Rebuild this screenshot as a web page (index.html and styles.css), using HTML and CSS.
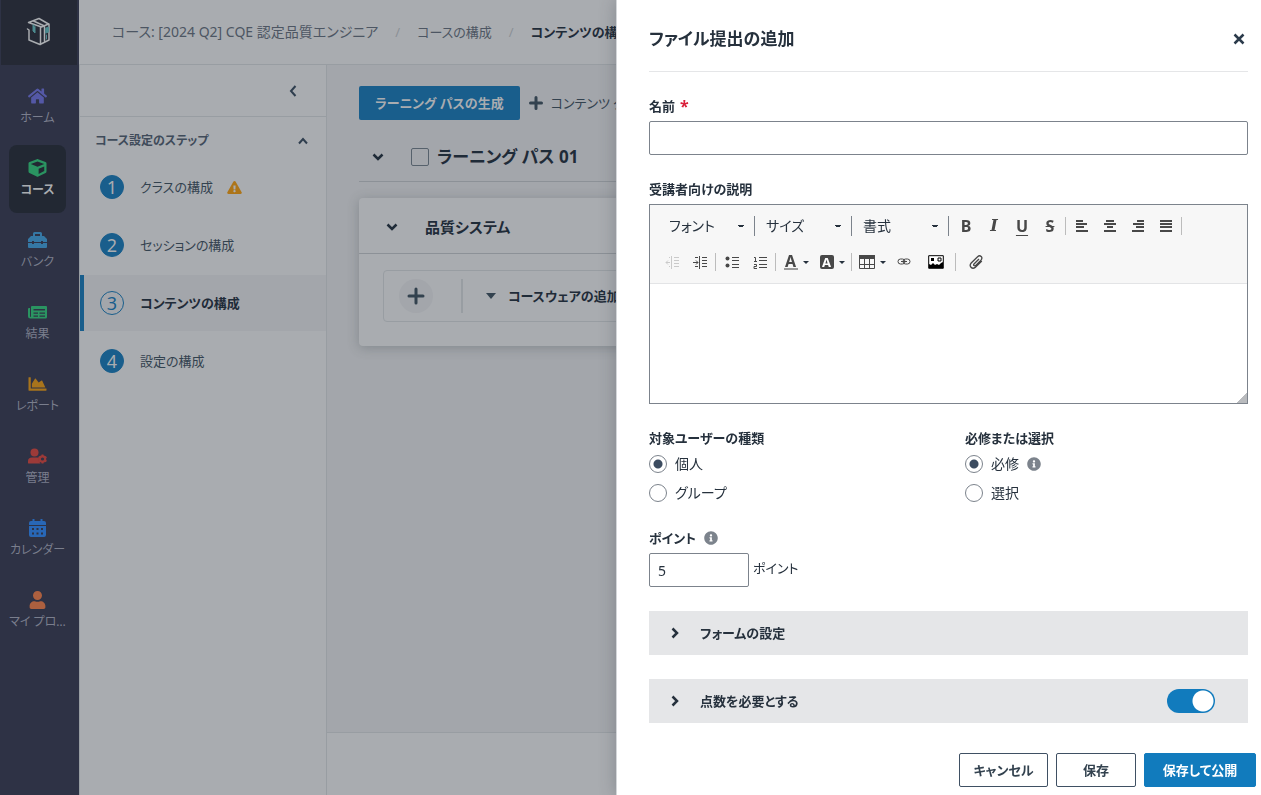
FILE: index.html
```html
<!DOCTYPE html>
<html lang="ja">
<head>
<meta charset="utf-8">
<meta name="viewport" content="width=device-width, initial-scale=1">
<title>ファイル提出の追加</title>
<link rel="stylesheet" href="styles.css">
</head>
<body>
<div class="app">
  <nav class="rail" aria-label="メイン">
    <a class="rail-logo" href="#" aria-label="トップ">
      <svg width="26" height="30" viewBox="0 0 26 30" fill="none" stroke="#a9acb0" stroke-width="1.5" stroke-linejoin="round" stroke-linecap="round"><path d="M2.500 5.500 13 1.500l9.500 5.500-7 3zM7.500 4l11 5M1.500 12l1.500 1v10l11 4.500 9-4.500V7M14.500 10v17.500M18.500 9.500V25"/><path d="M7 8v6l2 2V10zM20 11l2.500-1v5L20 16zM20.500 18v4" stroke="#4c8a8f" fill="#4c8a8f" stroke-width="1"/></svg>
    </a>
    <ul class="rail-list">
      <li><a class="rail-item" href="#"><svg class="ico-rail" viewBox="0 0 576 512" fill="#5458a6"><path d="M280.37 148.26L96 300.11V464a16 16 0 0 0 16 16l112.06-.29a16 16 0 0 0 15.92-16V368a16 16 0 0 1 16-16h64a16 16 0 0 1 16 16v95.64a16 16 0 0 0 16 16.05L464 480a16 16 0 0 0 16-16V300L295.67 148.26a12.19 12.19 0 0 0-15.3 0zM571.6 251.47L488 182.56V44.05a12 12 0 0 0-12-12h-56a12 12 0 0 0-12 12v72.61L318.47 43a48 48 0 0 0-61 0L4.34 251.47a12 12 0 0 0-1.6 16.9l25.5 31A12 12 0 0 0 45.15 301l235.22-193.74a12.19 12.19 0 0 1 15.3 0L530.9 301a12 12 0 0 0 16.9-1.6l25.5-31a12 12 0 0 0-1.7-16.93z"/></svg><span>ホーム</span></a></li>
      <li><a class="rail-item is-active" href="#"><svg class="ico-rail" viewBox="0 0 512 512" fill="#2a9461"><path d="M239.1 6.3l-208 78c-18.7 7-31.1 25-31.1 45v225.1c0 18.2 10.3 34.8 26.5 42.9l208 104c13.5 6.8 29.4 6.8 42.9 0l208-104c16.3-8.1 26.5-24.8 26.5-42.9V129.3c0-20-12.4-37.9-31.1-44.9l-208-78C262 2.2 250 2.2 239.1 6.3zM256 68.4l192 72v1.1l-192 78-192-78v-1.1l192-72zm32 356V275.5l160-65v133.9l-160 80z"/></svg><span>コース</span></a></li>
      <li><a class="rail-item" href="#"><svg class="ico-rail" viewBox="0 0 19 18" fill="#3578a5"><path fill-rule="evenodd" d="M5 5V2.500Q5 1 6.500 1h6Q14 1 14 2.500V5h2l3 3v3h-4v-1h-2v1H6v-1H4v1H0V8l3-3zM7 5h5V3H7zM0 12h4v1h2v-1h7v1h2v-1h4v4q0 1-1 1H1q-1 0-1-1z"/></svg><span>バンク</span></a></li>
      <li><a class="rail-item" href="#"><svg class="ico-rail" viewBox="0 0 19 18" fill="#2a9461"><path fill-rule="evenodd" d="M4 3h14q1 0 1 1v10q0 1.500-1.500 1.500h-15Q0 15.500 0 13V6q0-1 1-1h1v8q0 1 .6 1T3 13V4q0-1 1-1zm1.500 3v1.500H17V6zM5.500 9.500v1.200H10V9.500zm6 0v1.200H17V9.500zm-6 3v1.200H10v-1.200zm6 0v1.200H17v-1.200z"/></svg><span>結果</span></a></li>
      <li><a class="rail-item" href="#"><svg class="ico-rail" viewBox="0 0 512 512" fill="#a8741c"><path d="M500 384c6.600 0 12 5.400 12 12v40c0 6.600-5.400 12-12 12H12c-6.600 0-12-5.400-12-12V76c0-6.600 5.400-12 12-12h40c6.600 0 12 5.400 12 12v308h436zM372.700 159.500L288 216l-85.300-113.700c-5.100-6.800-15.500-6.300-19.900 1L96 248v104h384l-89.900-187.800c-3.200-6.500-11.400-8.700-17.400-4.700z"/></svg><span>レポート</span></a></li>
      <li><a class="rail-item" href="#"><svg class="ico-rail" viewBox="0 0 19 18" fill="#9c3a38"><circle cx="6.500" cy="5.500" r="4"/><path d="M0 16v-2q0-3.500 4-3.500h5.500q.8 0 1.500.4-1 3 1.500 5.600H1q-1 0-1-.5z"/><circle cx="14.500" cy="12" r="2.700" fill="none" stroke="#9c3a38" stroke-width="2.200"/><path d="M14.500 7.500v2m0 5v2m-3.900-6.700 1.800 1m4.200 2.500 1.800 1m0-4.500-1.800 1m-4.200 2.500-1.800 1" stroke="#9c3a38" stroke-width="2"/></svg><span>管理</span></a></li>
      <li><a class="rail-item" href="#"><svg class="ico-rail" viewBox="0 0 19 18" fill="#2867b6"><path fill-rule="evenodd" d="M1 6V4q0-2 2-2h1.500V0h2v2h6V0h2v2H16q2 0 2 2v2zM1 7h17v9q0 2-2 2H3q-2 0-2-2zm3 2v2h2V9zm4.500 0v2h2V9zM13 9v2h2V9zm-9 4.500v2h2v-2zm4.500 0v2h2v-2zm4.500 0v2h2v-2z"/></svg><span>カレンダー</span></a></li>
      <li><a class="rail-item" href="#"><svg class="ico-rail" viewBox="0 0 448 512" fill="#ad603f"><path d="M224 256c70.700 0 128-57.300 128-128S294.700 0 224 0 96 57.300 96 128s57.300 128 128 128zm89.600 32h-16.700c-22.200 10.200-46.900 16-72.900 16s-50.600-5.800-72.900-16h-16.700C60.200 288 0 348.200 0 422.400V464c0 26.500 21.500 48 48 48h352c26.500 0 48-21.500 48-48v-41.600c0-74.200-60.200-134.400-134.400-134.400z"/></svg><span>マイ プロ…</span></a></li>
    </ul>
  </nav>

  <div class="page">
    <header class="topbar">
      <ol class="crumbs">
        <li class="first"><a href="#">コース: [2024 Q2] CQE 認定品質エンジニア</a></li>
        <li><a href="#">コースの構成</a></li>
        <li class="current"><a href="#">コンテンツの構成</a></li>
      </ol>
    </header>
    <div class="body">
      <aside class="steps">
        <div class="steps-top">
          <button class="plain" type="button" aria-label="折りたたむ"><svg width="8" height="12" viewBox="0 0 8 12" fill="none" stroke="#2f3e4e" stroke-width="2"><path d="M6.500 1 2 6l4.500 5"/></svg></button>
        </div>
        <button class="plain steps-title" type="button"><span>コース設定のステップ</span><svg width="10" height="8" viewBox="0 0 10 8" fill="none" stroke="#2f3e4e" stroke-width="2"><path d="M1 6.500 5 2l4 4.500"/></svg></button>
        <ul class="steps-list">
          <li><a class="step" href="#"><span class="num">1</span>クラスの構成<svg class="warn" viewBox="0 0 576 512" fill="#ad7519"><path d="M569.517 440.013C587.975 472.007 564.806 512 527.940 512H48.054c-36.937 0-59.999-40.055-41.577-71.987L246.423 23.985c18.467-32.009 64.720-31.951 83.154 0l239.940 416.028zM288 354c-25.405 0-46 20.595-46 46s20.595 46 46 46 46-20.595 46-46-20.595-46-46-46zm-43.673-165.346l7.418 136c.347 6.364 5.609 11.346 11.982 11.346h48.546c6.373 0 11.635-4.982 11.982-11.346l7.418-136c.375-6.874-5.098-12.654-11.982-12.654h-63.383c-6.884 0-12.356 5.780-11.981 12.654z"/></svg></a></li>
          <li><a class="step" href="#"><span class="num">2</span>セッションの構成</a></li>
          <li><a class="step is-current" href="#"><span class="num">3</span>コンテンツの構成</a></li>
          <li><a class="step" href="#"><span class="num">4</span>設定の構成</a></li>
        </ul>
      </aside>
      <main class="content">
        <div class="actions">
          <button class="btn-path" type="button">ラーニング パスの生成</button>
          <button class="plain btn-add" type="button"><svg width="14" height="14" viewBox="0 0 14 14" stroke="#33424f" stroke-width="3" stroke-linecap="round"><path d="M7 1.500v11M1.500 7h11"/></svg>コンテンツ グループ</button>
        </div>
        <div class="path-head">
          <button class="plain" type="button" aria-label="開閉"><svg width="12" height="8" viewBox="0 0 12 8" fill="none" stroke="#1f2b38" stroke-width="2.500"><path d="M1.500 1.500 6 6l4.500-4.500"/></svg></button>
          <label><input class="box" type="checkbox">ラーニング パス 01</label>
        </div>
        <section class="card">
          <div class="card-head">
            <button class="plain" type="button" aria-label="開閉"><svg width="12" height="8" viewBox="0 0 12 8" fill="none" stroke="#1f2b38" stroke-width="2.500"><path d="M1.500 1.500 6 6l4.500-4.500"/></svg></button>
            <h2>品質システム</h2>
          </div>
          <div class="courseware">
            <button class="plain round" type="button" aria-label="追加"><svg width="18" height="18" viewBox="0 0 18 18" stroke="#33424f" stroke-width="3" stroke-linecap="round"><path d="M9 2v14M2 9h14"/></svg></button>
            <button class="plain cw-menu" type="button"><svg width="10" height="6" viewBox="0 0 10 6" fill="#33424f"><path d="M0 0h10L5 6z"/></svg>コースウェアの追加</button>
          </div>
        </section>
        <footer class="content-foot"></footer>
      </main>
    </div>
  </div>
</div>

<div class="drawer" role="dialog" aria-labelledby="dlg-title">
  <header class="drawer-head">
    <h1 id="dlg-title">ファイル提出の追加</h1>
    <button class="plain" type="button" aria-label="閉じる"><svg width="18" height="12" viewBox="0 0 18 12" stroke="#2b3b4b" stroke-width="2.500"><path d="m4.500 1.500 9 9M13.500 1.500l-9 9"/></svg></button>
  </header>
  <form class="form">
    <div class="field">
      <label class="label" for="name">名前 <span class="req">*</span></label>
      <input class="text" id="name" type="text">
    </div>
    <div class="field">
      <label class="label" for="desc">受講者向けの説明</label>
      <div class="editor">
        <div class="tools">
          <div class="row row-a">
            <select class="pick" aria-label="フォント"><option>フォント</option></select>
            <select class="pick" aria-label="サイズ"><option>サイズ</option></select>
            <select class="pick" aria-label="書式"><option>書式</option></select>
            <div class="group">
              <button class="tool b" type="button">B</button>
              <button class="tool i" type="button">I</button>
              <button class="tool u" type="button">U</button>
              <button class="tool s" type="button">S</button>
            </div>
            <div class="group">
              <button class="tool" type="button" aria-label="左揃え"><svg width="12" height="12" viewBox="0 0 12 12"><path d="M0 1h7M0 4h11M0 7h8M0 11h12" /></svg></button>
              <button class="tool" type="button" aria-label="中央揃え"><svg width="12" height="12" viewBox="0 0 12 12"><path d="M2 1h8M0 4h12M3 7h6M0 11h12"/></svg></button>
              <button class="tool" type="button" aria-label="右揃え"><svg width="12" height="12" viewBox="0 0 12 12"><path d="M5 1h7M1 4h11M4 7h8M0 11h12"/></svg></button>
              <button class="tool" type="button" aria-label="両端揃え"><svg width="12" height="12" viewBox="0 0 12 12"><path d="M0 1h12M0 4h12M0 7h12M0 11h12"/></svg></button>
            </div>
          </div>
          <div class="row">
            <div class="group">
              <button class="tool faded" type="button" disabled aria-label="インデント解除"><svg class="fine" width="14" height="13" viewBox="0 0 14 13"><path d="M9 1.500h5M9 4.500h5M9 7.500h5M9 10.500h5M6.500 0v13M4 1.500h1M4 10.500h1M1 6.500h4M3 4.500l-2 2 2 2"/></svg></button>
              <button class="tool" type="button" aria-label="インデント"><svg class="fine" width="14" height="13" viewBox="0 0 14 13"><path d="M9 1.500h5M9 4.500h5M9 7.500h5M9 10.500h5M6.500 0v13M2 1.500h3M2 10.500h3M0 6.500h5M3 4.500l2 2-2 2"/></svg></button>
            </div>
            <div class="group">
              <button class="tool" type="button" aria-label="箇条書き"><svg class="fine" width="14" height="12" viewBox="0 0 14 12"><circle cx="2.500" cy="2.500" r="2" fill="#484848" stroke="none"/><circle cx="2.500" cy="9.500" r="2" fill="#484848" stroke="none"/><path d="M7 1.500h7M7 4.500h7M7 8.500h7M7 11.500h7"/></svg></button>
              <button class="tool" type="button" aria-label="番号付き"><svg class="fine" width="14" height="13" viewBox="0 0 14 13"><path d="M1 1.500h1.500V5M1 5.500h3M1 8.500h2.500v2H1v2h3M6 1.500h8M6 4.500h8M6 8.500h8M6 11.500h8"/></svg></button>
            </div>
            <div class="group">
              <button class="tool menu" type="button" aria-label="文字色"><span class="fore">A</span></button>
              <button class="tool menu" type="button" aria-label="背景色"><span class="back">A</span></button>
            </div>
            <div class="group">
              <button class="tool menu" type="button" aria-label="表"><svg class="fine" width="16" height="14" viewBox="0 0 16 14"><path d="M.5.500h15v13H.5zM.5 9.500h15M5.500 3v11M10.500 3v11"/><path d="M0 2h16" stroke-width="4"/></svg></button>
              <button class="tool" type="button" aria-label="リンク"><svg class="fine" width="14" height="8" viewBox="0 0 14 8"><rect x="1" y="1" width="7" height="5" rx="2.500"/><rect x="6" y="1" width="7" height="5" rx="2.500"/><path d="M4 3.500h6"/></svg></button>
              <button class="tool wide" type="button" aria-label="画像"><svg width="16" height="14" viewBox="0 0 16 14"><path d="M.7.700h14.600v12.600H.7z" fill="#fff" stroke="#000" stroke-width="1"/><path d="M1 13V9l2 1 2-2 2 2 2-1 2 1 2-2 2-1v6z" fill="#000" stroke="none"/><path d="M3 3h3v3H3z" fill="#000" stroke="none"/><path d="M10 3h3v3h-3z" fill="none" stroke="#000" stroke-width="1"/></svg></button>
            </div>
            <div class="group">
              <button class="tool wide" type="button" aria-label="添付"><svg class="fine" width="14" height="14" viewBox="0 0 14 14"><path d="m10 4-5 5q-.8 1 0 1.600.8.600 1.500 0l5.500-5.500q1.700-2 .2-3.600-1.700-1.500-3.600.2L2.200 8Q.2 10.300 2 12.200t4.200.2L12.800 6" stroke-width="1.300"/></svg></button>
            </div>
          </div>
        </div>
        <textarea class="area" id="desc"></textarea>
      </div>
    </div>
    <div class="pair">
      <fieldset>
        <legend class="label">対象ユーザーの種類</legend>
        <label class="opt"><input type="radio" name="who" checked>個人</label>
        <label class="opt"><input type="radio" name="who">グループ</label>
      </fieldset>
      <fieldset>
        <legend class="label">必修または選択</legend>
        <label class="opt"><input type="radio" name="need" checked>必修<svg class="info" viewBox="0 0 512 512"><path d="M256 8C119.043 8 8 119.083 8 256c0 136.997 111.043 248 248 248s248-111.003 248-248C504 119.083 392.957 8 256 8zm0 110c23.196 0 42 18.804 42 42s-18.804 42-42 42-42-18.804-42-42 18.804-42 42-42zm56 254c0 6.627-5.373 12-12 12h-88c-6.627 0-12-5.373-12-12v-24c0-6.627 5.373-12 12-12h12v-64h-12c-6.627 0-12-5.373-12-12v-24c0-6.627 5.373-12 12-12h64c6.627 0 12 5.373 12 12v100h12c6.627 0 12 5.373 12 12v24z"/></svg></label>
        <label class="opt"><input type="radio" name="need">選択</label>
      </fieldset>
    </div>
    <div class="field">
      <label class="label" for="points">ポイント<svg class="info" viewBox="0 0 512 512"><path d="M256 8C119.043 8 8 119.083 8 256c0 136.997 111.043 248 248 248s248-111.003 248-248C504 119.083 392.957 8 256 8zm0 110c23.196 0 42 18.804 42 42s-18.804 42-42 42-42-18.804-42-42 18.804-42 42-42zm56 254c0 6.627-5.373 12-12 12h-88c-6.627 0-12-5.373-12-12v-24c0-6.627 5.373-12 12-12h12v-64h-12c-6.627 0-12-5.373-12-12v-24c0-6.627 5.373-12 12-12h64c6.627 0 12 5.373 12 12v100h12c6.627 0 12 5.373 12 12v24z"/></svg></label>
      <div class="points"><input class="text short" id="points" type="text" inputmode="numeric" value="5"><span>ポイント</span></div>
    </div>
    <div class="fold">
      <button class="plain" type="button"><svg width="8" height="12" viewBox="0 0 8 12" fill="none" stroke="#26313d" stroke-width="2.500"><path d="m1.500 1.500 4.500 4.500-4.500 4.500"/></svg>フォームの設定</button>
    </div>
    <div class="fold">
      <button class="plain" type="button"><svg width="8" height="12" viewBox="0 0 8 12" fill="none" stroke="#26313d" stroke-width="2.500"><path d="m1.500 1.500 4.500 4.500-4.500 4.500"/></svg>点数を必要とする</button>
      <input class="switch" type="checkbox" checked aria-label="点数を必要とする">
    </div>
  </form>
  <footer class="drawer-foot">
    <button class="btn cancel" type="button">キャンセル</button>
    <button class="btn save" type="button">保存</button>
    <button class="btn primary" type="button">保存して公開</button>
  </footer>
</div>
</body>
</html>
```

FILE: styles.css
```css
* { box-sizing: border-box; }
body {
  margin: 0;
  font: 14px/20px "Noto Sans", "Noto Sans CJK JP", sans-serif;
  font-feature-settings: "palt";
  color: #26313d;
  overflow: hidden;
}
button, input, select, textarea { font: inherit; font-feature-settings: inherit; color: inherit; margin: 0; }
ul, ol { list-style: none; margin: 0; padding: 0; }
h1, h2 { margin: 0; }
a { color: inherit; text-decoration: none; }
fieldset { border: 0; margin: 0; padding: 0; min-width: 0; }
legend { padding: 0; }
svg { flex: none; }
.plain { display: flex; align-items: center; border: 0; background: none; padding: 0; }

.app { display: flex; height: 100vh; background: #a9acb0; }

/* navigation rail */
.rail { flex: none; width: 79px; background: #2e3245; }
.rail-logo { display: flex; align-items: center; justify-content: center; height: 65px; margin: 0 2px 0 1px; padding-bottom: 2px; background: #252935; }
.rail-list { display: flex; flex-direction: column; gap: 4px; padding: 8px 13px 0 9px; }
.rail-item { display: flex; flex-direction: column; align-items: center; gap: 3px; height: 68px; padding-top: 14px; border-radius: 8px; color: #7a7e8d; font-size: 12px; white-space: nowrap; }
.rail-item.is-active { background: #222833; color: #a9acb0; font-weight: 700; }
.ico-rail { width: 19px; height: 18px; }

/* header */
.page { flex: 1; min-width: 0; display: flex; flex-direction: column; }
.topbar { flex: none; height: 65px; padding: 0 33px; border-bottom: 1px solid #989da2; }
.crumbs { display: flex; align-items: center; height: 64px; color: #4d5663; white-space: nowrap; font-size: 13px; }
.crumbs .first { font-size: 14px; }
.crumbs li { flex: none; }
.crumbs li + li::before { content: "/"; margin: 0 17px; color: #8b9096; }
.crumbs .current { color: #1f2b38; font-weight: 700; }
.crumbs .current::before { font-weight: 400; }
.body { flex: 1; min-height: 0; display: flex; }

/* step list */
.steps { flex: none; width: 248px; border: solid #989da2; border-width: 0 1px; }
.steps-top { display: flex; justify-content: flex-end; align-items: center; height: 52px; padding-right: 29px; border-bottom: 1px solid #989da2; }
.steps-title { width: 100%; height: 42px; padding: 6px 18px 0 15px; justify-content: space-between; font-size: 12px; font-weight: 700; color: #3f4b5a; }
.steps-list { display: flex; flex-direction: column; gap: 2px; }
.step { display: flex; align-items: center; height: 56px; padding-left: 20px; color: #33424f; font-size: 13px; }
.step .num { display: grid; place-items: center; width: 24px; height: 24px; margin-right: 16px; border: 1px solid #195e8c; border-radius: 50%; background: #195e8c; color: #a9acb0; font-size: 18px; }
.step.is-current { padding-left: 16px; border-left: 4px solid #195e8c; background: #a3a6ab; color: #1f2b38; font-weight: 700; }
.step.is-current .num { background: none; color: #195e8c; font-weight: 400; }
.warn { width: 15px; height: 13px; margin-left: 14px; }

/* content */
.content { flex: 1; min-width: 0; display: flex; flex-direction: column; padding-top: 21px; background: #a3a6ab; white-space: nowrap; }
.actions { display: flex; align-items: center; gap: 9px; padding-left: 32px; }
.btn-path { flex: none; height: 34px; padding: 0 16px; border: 0; border-radius: 2px; background: #195e8c; color: #a9acb0; font-size: 13px; font-weight: 700; }
.btn-add { gap: 8px; font-size: 13px; color: #33424f; }
.path-head { display: flex; align-items: center; height: 62px; margin-left: 32px; padding: 13px 0 0 13px; border-bottom: 1px solid #8c9197; gap: 27px; color: #1f2b38; font-size: 17px; font-weight: 700; }
.path-head label { display: flex; align-items: center; gap: 8px; }
.box { appearance: none; width: 18px; height: 18px; border: 1px solid #56616c; border-radius: 2px; }
.card { margin: 16px 0 0 32px; height: 148px; border-radius: 4px; background: #a9acb0; box-shadow: 0 2px 12px rgba(60, 68, 76, .3); }
.card-head { display: flex; align-items: center; gap: 27px; height: 56px; padding: 3px 27px 0; border-bottom: 1px solid #8c9197; color: #1f2b38; }
.card-head h2 { font-size: 15px; }
.courseware { display: flex; align-items: center; height: 52px; margin: 16px 24px; padding-left: 15px; border: 1px solid #989da2; border-radius: 4px; }
.round { justify-content: center; width: 34px; height: 34px; border-radius: 50%; background: #a3a6ab; }
.cw-menu { gap: 12px; height: 34px; margin-left: 28px; padding-left: 23px; border-left: 2px solid #989da2; color: #1f2b38; font-size: 13px; font-weight: 700; }
.content-foot { margin-top: auto; height: 63px; border-top: 1px solid #989da2; background: #a9acb0; }

/* drawer */
.drawer { position: fixed; inset: 0 0 0 616px; display: flex; flex-direction: column; background: #fff; border-left: 1px solid #d3d6d9; box-shadow: 0 0 16px rgba(50, 56, 64, .3); }
.drawer-head { flex: none; display: flex; align-items: center; justify-content: space-between; height: 72px; margin: 0 13px 0 32px; padding-top: 6px; border-bottom: 1px solid #e5e6e8; }
.drawer-head h1 { font-size: 17px; line-height: 24px; }
.form { flex: 1; min-height: 0; display: flex; flex-direction: column; gap: 24px; padding: 24px 13px 0 32px; }
.label { display: flex; align-items: center; height: 20px; margin-bottom: 5px; font-size: 13px; font-weight: 700; }
.req { margin-left: 5px; color: #d9203a; font-size: 16px; }
.text { display: block; width: 100%; height: 34px; padding: 0 8px; border: 1px solid #7c838c; border-radius: 2px; background: #fff; }
.text.short { width: 100px; }
.points { display: flex; align-items: center; gap: 4px; }
.points span { padding-bottom: 4px; font-size: 13px; }
.info { width: 14px; height: 14px; margin-left: 8px; fill: #7c838c; }

.editor { height: 200px; display: flex; flex-direction: column; border: 1px solid #7c838c; }
.tools { display: flex; flex-direction: column; gap: 8px; height: 79px; padding: 7px 8px; border-bottom: 1px solid #e3e4e6; background: #f7f7f7; }
.row { display: flex; align-items: center; height: 28px; }
.pick { appearance: none; width: 97px; height: 20px; padding: 0 11px; border: 0; border-right: 1px solid #7c838c; border-radius: 0; background: linear-gradient(#26313d, #26313d) no-repeat right 11px center / 4px 2px, linear-gradient(#26313d, #26313d) no-repeat right 10px top 9px / 6px 1px; font-size: 14px; line-height: 20px; }
.group { display: flex; align-items: center; }
.group + .group::before, .row-a .group:last-child::after { content: ""; width: 1px; height: 18px; margin: 0 2px 0 1px; background: #bcbcbc; }
.row-a .group:nth-child(4) { margin-left: 3px; }
.tool { display: flex; align-items: center; justify-content: center; width: 28px; height: 26px; padding: 0; border: 0; background: none; color: #484848; font-size: 16px; font-weight: 700; line-height: 20px; }
.tool svg { fill: none; stroke: #484848; stroke-width: 2; }
.tool svg.fine { stroke-width: 1; }
.i { font-family: "DejaVu Serif", serif; font-style: italic; }
.u { text-decoration: underline; text-underline-offset: 3px; }
.s { text-decoration: line-through 1px; }
.faded { opacity: .25; }
.menu { width: 36px; gap: 5px; }
.menu::after { content: ""; border: 3px solid transparent; border-top-color: #26313d; border-bottom: 0; }
.wide { width: 36px; }
.fore { border-bottom: 2px solid #9a9a9a; line-height: 14px; width: 14px; }
.back { width: 14px; height: 14px; border-radius: 2px; background: #484848; color: #fff; font-size: 13px; line-height: 14px; }
.area { flex: 1; width: 100%; padding: 8px; border: 0; resize: none; background: linear-gradient(135deg, transparent 50%, #b9bbbe 50%) no-repeat right bottom / 10px 10px; }

.pair { display: grid; grid-template-columns: 316px 1fr; margin-bottom: -2px; }
.pair .label { margin-bottom: 3px; }
.opt { display: flex; align-items: center; height: 26px; }
.opt + .opt { margin-top: 3px; }
.opt input { appearance: none; width: 18px; height: 18px; margin-right: 8px; border: 1px solid #7c838c; border-radius: 50%; }
.opt input:checked { background: radial-gradient(circle, #3c4c60 4px, transparent 5px); }

.fold { display: flex; align-items: center; justify-content: space-between; flex: none; height: 44px; padding: 0 33px 0 22px; background: #e5e6e8; }
.fold button { gap: 21px; font-size: 13px; font-weight: 700; }
.switch { appearance: none; width: 48px; height: 24px; border-radius: 12px; background: radial-gradient(circle at 36px 12px, #fff 10px, transparent 11px) #117bbd; }

.drawer-foot { flex: none; display: flex; justify-content: flex-end; gap: 8px; padding: 8px 5px; }
.btn { height: 34px; padding: 0 12px; border: 1px solid #3f5063; border-radius: 2px; background: #fff; color: #33424f; font-size: 13px; font-weight: 700; white-space: nowrap; }
.cancel { min-width: 89px; }
.save { min-width: 80px; }
.primary { min-width: 112px; border-color: #117bbd; background: #117bbd; color: #fff; }
```
